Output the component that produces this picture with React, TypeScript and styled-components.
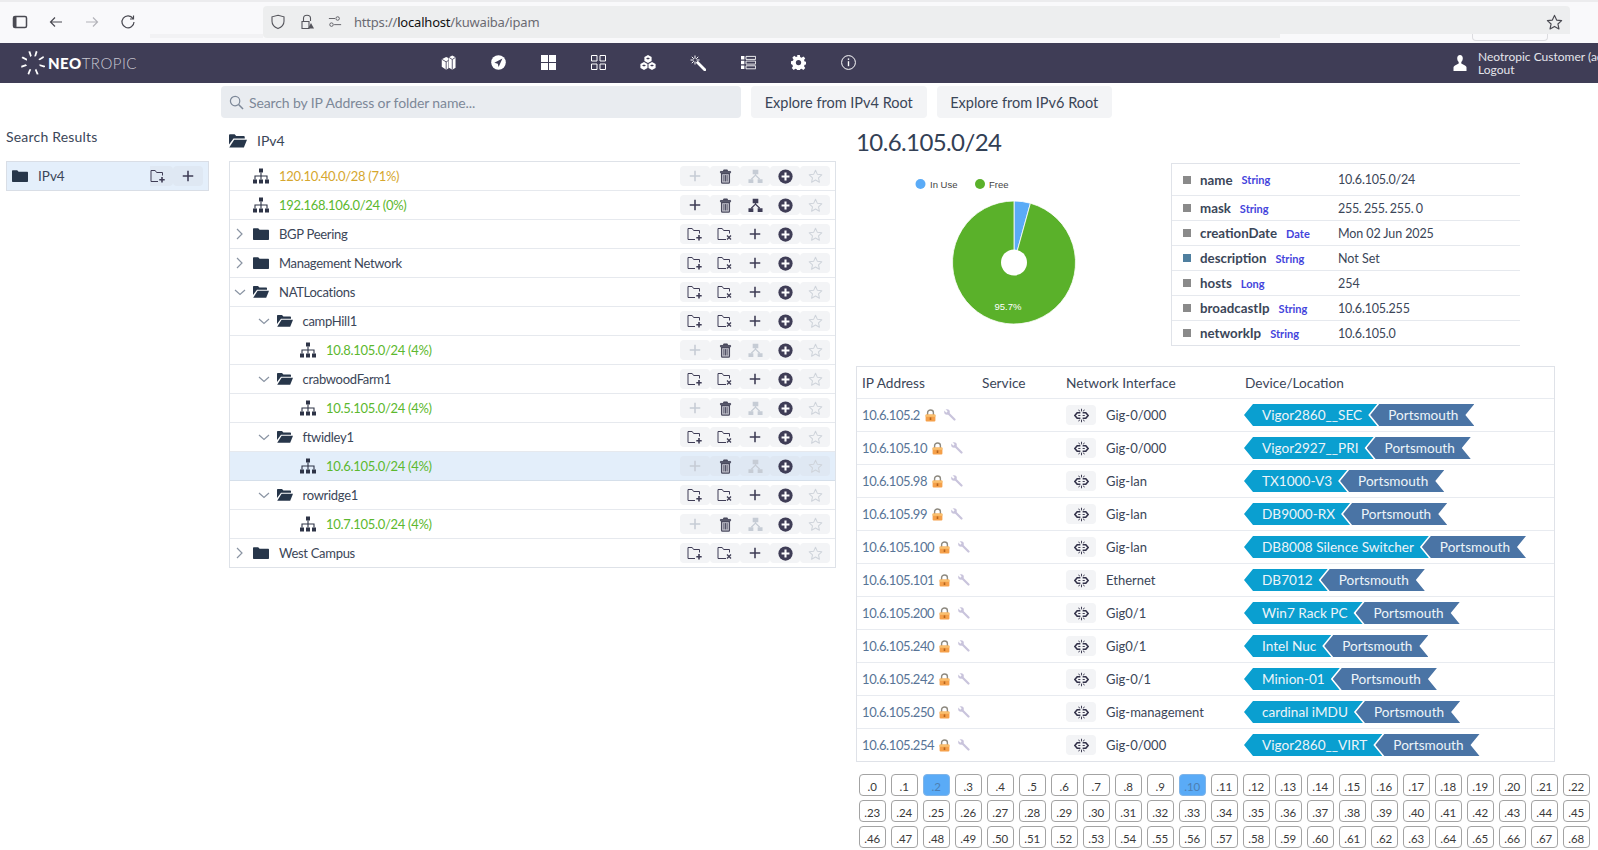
import styled, { createGlobalStyle } from "styled-components";

const GlobalStyle = createGlobalStyle`
  html, body {
    margin: 0;
    height: 850px;
    overflow: hidden;
    background: #fff;
    font-family: Lato, "Noto Sans", sans-serif;
    color: #3b4658;
  }
  * { box-sizing: border-box; }
`;

const DARK = "#3f3d56";
const MUTED = "#c6ccd5";
const FOLDER = "#27364a";

type IconProps = { color?: string; size?: number };

const Svg = ({ size = 16, color = "currentColor", children }: IconProps & { children: React.ReactNode }) => (
  <svg width={size} height={size} viewBox="0 0 16 16" fill="none" stroke={color} style={{ color, flex: "none" }}>
    {children}
  </svg>
);

const FolderClosed = ({ size = 16, color = FOLDER }: IconProps) => (
  <Svg size={size} color={color}>
    <path d="M0 3.2c0-.6.4-1 1-1h4.2l1.4 1.6H15c.6 0 1 .4 1 1v8.2c0 .6-.4 1-1 1H1c-.6 0-1-.4-1-1z" fill={color} stroke="none" />
  </Svg>
);

const FolderOpen = ({ size = 16, color = FOLDER }: IconProps) => (
  <Svg size={size} color={color}>
    <path d="M0 3c0-.6.4-1 1-1h4l1.4 1.5H13c.6 0 1 .4 1 1v1.2H4L0 11z" fill={color} stroke="none" />
    <path d="M4.6 6.8H16l-2.8 7H.2z" fill={color} stroke="none" />
  </Svg>
);

const Sitemap = ({ size = 16, color = "#2e3447" }: IconProps) => (
  <Svg size={size} color={color}>
    <path d="M6 0.5h4v4H6zM0 11.5h4v4H0zM6 11.5h4v4H6zM12 11.5h4v4h-4z" fill={color} stroke="none" />
    <path d="M8 4.5v7M2 11.5V8h12v3.5" strokeWidth="1.1" />
  </Svg>
);

const Hierarchy = ({ color = DARK }: IconProps) => (
  <Svg size={15} color={color}>
    <path d="M5 .8h6v4.700H5zM.5 10.800h5.200v4.200H.5zM10.300 10.800h5.200v4.200h-5.200z" fill={color} stroke="none" />
    <path d="M8 5v1.500L3.500 11M8 6.500l4.500 4.500" strokeWidth="1.400" />
  </Svg>
);

const Plus = ({ color = DARK }: IconProps) => (
  <Svg size={14} color={color}>
    <path d="M8 2v12M2 8h12" strokeWidth="1.800" />
  </Svg>
);

const Trash = ({ color = "#4a4a5e" }: IconProps) => (
  <Svg size={15} color={color}>
    <path d="M6 2.200V1h4v1.200M2.600 2.600h10.800v1.500H2.600z" fill={color} strokeWidth="1" />
    <path d="M3.800 5h8.400v9c0 .6-.4 1-1 1H4.800c-.6 0-1-.4-1-1z" fill="#c9c9d3" strokeWidth="1.300" />
    <path d="M6.300 6.500v6.800M8 6.500v6.800M9.700 6.500v6.800" strokeWidth="1" />
  </Svg>
);

const CirclePlus = () => (
  <Svg size={15} color={DARK}>
    <circle cx="8" cy="8" r="7.600" fill={DARK} stroke="none" />
    <path d="M8 3.800v8.400M3.800 8h8.400" stroke="#fff" strokeWidth="2.200" />
  </Svg>
);

const StarIcon = ({ color = "#cfd4db", size = 15 }: IconProps) => (
  <Svg size={size} color={color}>
    <path d="M8 1.300l2 4.400 4.700.5-3.500 3.200 1 4.700L8 11.700l-4.200 2.400 1-4.700L1.300 6.200 6 5.700z" strokeWidth="1.100" strokeLinejoin="round" />
  </Svg>
);

const FolderAdd = () => (
  <Svg size={16} color={DARK}>
    <path d="M12.500 7.500V4.500H6.600L5.200 2.500H1v11h7" strokeWidth="1" />
    <path d="M12 9v5.500M9.300 11.700h5.400" strokeWidth="1.600" />
  </Svg>
);

const FolderRemove = () => (
  <Svg size={16} color={DARK}>
    <path d="M12.500 7.500V4.500H6.600L5.200 2.500H1v11h8" strokeWidth="1" />
    <path d="M10 9.500l4 4M14 9.500l-4 4" strokeWidth="1.300" />
  </Svg>
);

const Unlink = () => (
  <Svg size={15} color="#33324a">
    <path d="M6.800 5H3.400L.9 8l2.500 3h3.400" strokeWidth="1.700" />
    <path d="M9.200 5h3.400L15.100 8l-2.500 3H9.200" strokeWidth="1.700" />
    <path d="M8 .8v2.800M8 12.400v2.800M5 1.800l1 1.800M11 1.800l-1 1.800M5 14.200l1-1.800M11 14.200l-1-1.800M4.500 8h2.300M9.200 8h2.300" strokeWidth="1" />
  </Svg>
);

const LockIcon = () => (
  <svg width="11" height="13" viewBox="0 0 11 13" style={{ flex: "none" }}>
    <path d="M2.600 6V3.600C2.600 2 3.800 1 5.500 1s2.900 1 2.900 2.600V6" fill="none" stroke="#8e8a80" strokeWidth="1.400" />
    <rect x=".6" y="5.600" width="9.800" height="7" rx="1" fill="#f5a04a" />
    <rect x=".6" y="5.600" width="9.800" height="2.200" fill="#f9c06f" />
    <rect x="4.700" y="8.400" width="1.600" height="2.600" fill="#b5651d" />
  </svg>
);

const WrenchIcon = () => (
  <svg width="12" height="12" viewBox="0 0 12 12" style={{ flex: "none", marginLeft: 3 }}>
    <circle cx="3" cy="3" r="2.800" fill="#c9c4dc" />
    <path d="M3.500 3.500l7 7" stroke="#c9c4dc" strokeWidth="2.200" strokeLinecap="round" />
    <path d="M-.5 -.5L3 3" stroke="#fff" strokeWidth="1.800" />
  </svg>
);

const Logo = () => (
  <svg width="24" height="26" viewBox="-12.500 -13.500 25 27" style={{ flex: "none" }}>
    {[15, 58, 105, 155, 200, 250, 295, 340].map((a) => (
      <path key={a} d="M-.4 -13L1.500 -12.500L1.300 -7.500L-.5 -6.800z" fill="#fff" transform={`rotate(${a})`} />
    ))}
  </svg>
);

const NavIcons = [
  <svg key="box" width="15" height="15" viewBox="0 0 16 16"><path d="M.8 4.500L5.500 2 8 3.300V14l-2.500 1.600L.8 12.500zM8.500 2.500L12 .6l3.500 1.900v11L12 15.600l-3.500-2z" fill="#fff" /><path d="M.8 4.500l4.700 2.800v8.300M5.500 7.300L8 5.800M8.500 2.500l3.500 2.300 3.500-2.300M12 4.800v10.800" fill="none" stroke={DARK} strokeWidth=".9" /></svg>,
  <svg key="nav" width="15" height="15" viewBox="0 0 16 16"><circle cx="8" cy="8" r="7.800" fill="#fff" /><path d="M12.200 3.800L3.600 8.200l3.600 1 .9 3.600z" fill={DARK} /></svg>,
  <svg key="grid" width="15" height="15" viewBox="0 0 15 15" fill="#fff"><path d="M0 0h7v7H0zM8 0h7v7H8zM0 8h7v7H0zM8 8h7v7H8z" /></svg>,
  <svg key="grido" width="15" height="15" viewBox="0 0 15 15" fill="none" stroke="#fff"><path d="M.5.5h5.500v5.500H.5zM9 .5h5.500v5.500H9zM.5 9h5.500v5.500H.5zM9 9h5.500v5.500H9z" /></svg>,
  <svg key="cubes" width="16" height="15" viewBox="0 0 16 15" fill="#fff"><path d="M8 0l3.600 2v4L8 8 4.400 6V2zM4 7l3.500 2v4L4 15 .4 13V9zM12 7l3.600 2v4L12 15l-3.500-2V9z" /><path d="M8 2.400l2 1.100-2 1.100-2-1.100zM4 9.400l2 1.100-2 1.100-2-1.100zM12 9.400l2 1.100-2 1.100-2-1.100z" fill={DARK} /></svg>,
  <svg key="wand" width="16" height="16" viewBox="0 0 16 16"><path d="M6.800 6.800l9 9" stroke="#fff" strokeWidth="2.800" /><path d="M5 .5v3.200M5 6.500V9.500M.5 5h3.200M6.500 5H9.500M1.800 1.800l2 2M8.200 1.800l-2 2M1.800 8.200l2-2" stroke="#fff" strokeWidth="1" /></svg>,
  <svg key="list" width="15" height="15" viewBox="0 0 15 15" fill="#fff"><path d="M0 1h3.400v3.400H0zM0 5.800h3.400v3.400H0zM0 10.600h3.400V14H0z" /><path d="M5 1.400h9.600v3H5zM5 6.100h9.600v3H5zM5 10.800h9.600v3H5z" fill="none" stroke="#fff" strokeWidth=".9" /></svg>,
  <svg key="gear" width="15" height="15" viewBox="0 0 16 16"><path d="M6.600 0h2.800l.4 2.200 1.500.6 1.900-1.300 2 2-1.300 1.900.6 1.500 2.200.4v2.800l-2.200.4-.6 1.500 1.300 1.900-2 2-1.900-1.300-1.500.6-.4 2.200H6.600l-.4-2.200-1.500-.6-1.900 1.300-2-2 1.300-1.900-.6-1.500L-.1 9.400V6.600l2.200-.4.6-1.500-1.300-1.900 2-2 1.900 1.300 1.500-.6z" fill="#fff" /><circle cx="8" cy="8" r="2.800" fill={DARK} /></svg>,
  <svg key="info" width="15" height="15" viewBox="0 0 15 15" fill="none" stroke="#fff"><circle cx="7.500" cy="7.500" r="6.900" /><path d="M7.500 6.200v5" strokeWidth="1.400" /><path d="M7.500 3.400v1.500" strokeWidth="1.400" /></svg>,
];

const BrowserBar = styled.div`
  height: 43px;
  background: #f9f9fb;
  border-top: 2px solid #ececee;
  display: flex;
  align-items: flex-start;
  position: relative;
`;

const BrowserTools = styled.div`
  width: 263px;
  height: 40px;
  display: flex;
  align-items: center;
  padding-left: 12px;
  gap: 20px;
  color: #4a4a52;
`;

const AddressBar = styled.div`
  margin-top: 4px;
  width: 1307px;
  height: 32px;
  background: #edeeef;
  border-radius: 4px;
  display: flex;
  align-items: center;
  padding: 0 7px;
  gap: 13px;
  font-family: "Noto Sans", sans-serif;
  font-size: 13px;
  letter-spacing: -0.2px;
  color: #6a6a72;
`;

const BarEdge = styled.div<{ $left: number; $width: number; $tone: string }>`
  position: absolute;
  top: 32px;
  left: ${(p) => p.$left}px;
  width: ${(p) => p.$width}px;
  height: 4px;
  background: ${(p) => p.$tone};
`;

const HiddenTab = styled.div`
  position: absolute;
  top: 32px;
  left: 1472px;
  width: 76px;
  height: 7px;
  border: 1px solid #dcdce0;
  border-top: none;
  border-radius: 0 0 4px 4px;
`;

const Url = styled.span`
  margin-left: -1px;
  flex: 1;
  b { font-weight: 400; color: #111; }
`;

const NavBar = styled.header`
  height: 40px;
  background: ${DARK};
  display: flex;
  align-items: center;
  padding-left: 21px;
  overflow: hidden;
  white-space: nowrap;
`;

const Brand = styled.div`
  width: 402px;
  flex: none;
  display: flex;
  align-items: center;
  gap: 3px;
  font-size: 15px;
  letter-spacing: 0.5px;
  color: #c9c9d2;
  font-weight: 300;
  b { color: #fff; font-weight: 900; }
`;

const NavMenu = styled.nav`
  display: flex;
  width: 1030px;
  flex: none;
`;

const NavItem = styled.div`
  width: 50px;
  display: flex;
  justify-content: center;
`;

const UserBox = styled.div`
  display: flex;
  flex: none;
  align-items: center;
  gap: 11px;
  color: #e4e4ea;
  font-size: 12px;
`;

const UserLine = styled.div`
  height: 13px;
  line-height: 13px;
`;

const Page = styled.main`
  display: grid;
  grid-template-columns: 221px 635px 1fr;
  grid-template-rows: 35px 1fr;
`;

const SearchRow = styled.div`
  grid-column: 2 / 4;
  display: flex;
  gap: 10px;
  padding-top: 3px;
`;

const SearchBox = styled.div`
  width: 520px;
  height: 32px;
  background: #e9ecf0;
  border-radius: 4px;
  display: flex;
  align-items: center;
  padding: 0 8px;
  gap: 5px;
  font-size: 14px;
  letter-spacing: -0.11px;
  color: #7d8898;
`;

const ExploreButton = styled.button`
  width: 175.5px;
  height: 32px;
  border: none;
  border-radius: 4px;
  background: #f3f4f6;
  font: 14.5px Lato, sans-serif;
  color: #3b4658;
  padding: 0;
`;

const LeftColumn = styled.aside`
  grid-column: 1;
  grid-row: 2;
  padding: 9px 12px 0 6px;
`;

const SideTitle = styled.div`
  font-size: 14px;
  line-height: 20px;
  margin-bottom: 14px;
  letter-spacing: 0.2px;
`;

const ResultRow = styled.div`
  height: 30px;
  border: 1px solid #d9dee6;
  background: #e4effb;
  display: flex;
  align-items: center;
  padding: 0 5px;
  gap: 10px;
  font-size: 13.5px;
`;

const ResultActions = styled.div`
  margin-left: auto;
  display: flex;
`;

const ResultAction = styled.div`
  width: 30px;
  height: 20px;
  background: #dfe8f3;
  border-radius: 4px;
  display: flex;
  align-items: center;
  justify-content: center;
  &:first-child {
    width: 23px;
    border-radius: 0 4px 4px 0;
    justify-content: flex-start;
  }
`;

const MiddleColumn = styled.section`
  grid-column: 2;
  grid-row: 2;
  padding-left: 8px;
`;

const RootHeader = styled.div`
  height: 43px;
  padding: 2px 0 0 0;
  display: flex;
  align-items: center;
  gap: 10px;
  font-size: 14px;
`;

const Tree = styled.div`
  width: 607px;
  border: solid #dee2e8;
  border-width: 1px 1px 0;
`;

const TreeRowBox = styled.div<{ $selected?: boolean; $level: number }>`
  height: 29px;
  border-bottom: 1px solid ${(p) => (p.$selected ? "#d5dfea" : "#e6e9ee")};
  background: ${(p) => (p.$selected ? "#e3eefa" : "#fff")};
  display: flex;
  align-items: center;
  padding: 0 5px 0 ${(p) => 4 + p.$level * 23.5}px;
  &:last-child { border-bottom-color: #dee2e8; }
`;

const Chevron = styled.svg`
  width: 12px;
  height: 12px;
  flex: none;
  margin-right: 7px;
`;

const TreeLabel = styled.span<{ $color?: string }>`
  margin-left: 10px;
  font-size: 13px;
  letter-spacing: -0.3px;
  color: ${(p) => p.$color || "#3b4658"};
`;

const Actions = styled.div`
  margin-left: auto;
  display: flex;
`;

const Action = styled.div<{ $tint?: boolean }>`
  width: 30px;
  height: 20px;
  border-radius: 4px;
  background: ${(p) => (p.$tint ? "#dfe8f3" : "#f3f4f6")};
  display: flex;
  align-items: center;
  justify-content: center;
`;

const RightColumn = styled.section`
  grid-column: 3;
  grid-row: 2;
  width: 699px;
`;

const Heading = styled.h2`
  margin: 9px 0 1px;
  font-size: 24px;
  line-height: 30px;
  font-weight: 400;
  letter-spacing: -0.6px;
  color: #334055;
`;

const InfoRow = styled.div`
  height: 208px;
  display: flex;
`;

const PropsTable = styled.div`
  width: 349px;
  height: 183px;
  margin: 5px 0 0 315px;
  border: solid #e0e3e9;
  border-width: 1px 0 1px 1px;
  flex: none;
`;

const ChartBox = styled.svg`
  width: 315px;
  height: 208px;
  margin-right: -315px;
  flex: none;
`;

const PropRow = styled.div<{ $first?: boolean }>`
  height: ${(p) => (p.$first ? 31 : 25)}px;
  display: grid;
  grid-template-columns: 166px 1fr;
  align-items: center;
  border-top: ${(p) => (p.$first ? "none" : "1px solid #e6e9ee")};
  font-size: 12.5px;
`;

const PropName = styled.div`
  display: flex;
  align-items: center;
  padding-left: 11px;
  gap: 9px;
  font-size: 13.3px;
  font-weight: 700;
  color: #3b4658;
`;

const PropValue = styled.span<{ $spacing?: number; $words?: number }>`
  letter-spacing: ${(p) => p.$spacing || 0}px;
  word-spacing: ${(p) => p.$words || 0}px;
`;

const Marker = styled.span<{ $color?: string }>`
  width: 8px;
  height: 8px;
  background: ${(p) => p.$color || "#8a8a8a"};
`;

const TypeLabel = styled.span`
  font-size: 11px;
  font-weight: 700;
  color: #4444dc;
`;

const IpTable = styled.div`
  border: 1px solid #dfe2e8;
`;

const IpRowBox = styled.div<{ $head?: boolean }>`
  height: ${(p) => (p.$head ? 31 : 33)}px;
  display: grid;
  grid-template-columns: 120px 84px 179px 1fr;
  align-items: center;
  padding-left: 5px;
  border-top: ${(p) => (p.$head ? "none" : "1px solid #e8ebf0")};
  font-size: ${(p) => (p.$head ? 13.7 : 13)}px;
  white-space: nowrap;
`;

const IpCell = styled.div`
  display: flex;
  align-items: center;
  gap: 5px;
  color: #587496;
  letter-spacing: -0.4px;
`;

const IfaceCell = styled.div`
  display: flex;
  align-items: center;
  gap: 10px;
`;

const IfaceButton = styled.div`
  width: 30px;
  height: 20px;
  border-radius: 4px;
  background: #f3f4f6;
  display: flex;
  align-items: center;
  justify-content: center;
`;

const Tags = styled.div`
  display: flex;
  margin-left: -1px;
`;

const Tag = styled.span<{ $location?: boolean }>`
  height: 22px;
  line-height: 22px;
  padding: 0 ${(p) => (p.$location ? 16 : 15)}px 0 18px;
  font-size: 13.6px;
  color: #edf4f9;
  background: ${(p) => (p.$location ? "#4a74a5" : "#0a9fd0")};
  margin-left: ${(p) => (p.$location ? -7 : 0)}px;
  clip-path: polygon(0 50%, 9px 0, 100% 0, calc(100% - 9px) 50%, 100% 100%, 9px 100%);
`;

const Bubbles = styled.div`
  margin: 12px 0 0 2.5px;
  display: grid;
  grid-template-columns: repeat(23, 27.5px);
  grid-auto-rows: 21.5px;
  gap: 4.5px;
`;

const Bubble = styled.div<{ $on?: boolean }>`
  border: 1px solid ${(p) => (p.$on ? "#7fb4e8" : "#a3a3a3")};
  border-radius: 4px;
  background: ${(p) => (p.$on ? "#5aabf7" : "#fff")};
  color: ${(p) => (p.$on ? "#4d7fb3" : "#3a3a3a")};
  font-size: 11.5px;
  display: flex;
  align-items: flex-end;
  justify-content: center;
  padding-bottom: 2px;
`;

type Row = { level: number; label: string; kind: "subnet" | "folder"; color?: string; open?: boolean; active?: boolean; selected?: boolean };

const GREEN = "#5cb82e";
const rows: Row[] = [
  { level: 0, label: "120.10.40.0/28 (71%)", kind: "subnet", color: "#d6a72e" },
  { level: 0, label: "192.168.106.0/24 (0%)", kind: "subnet", color: GREEN, active: true },
  { level: 0, label: "BGP Peering", kind: "folder" },
  { level: 0, label: "Management Network", kind: "folder" },
  { level: 0, label: "NATLocations", kind: "folder", open: true },
  { level: 1, label: "campHill1", kind: "folder", open: true },
  { level: 2, label: "10.8.105.0/24 (4%)", kind: "subnet", color: GREEN },
  { level: 1, label: "crabwoodFarm1", kind: "folder", open: true },
  { level: 2, label: "10.5.105.0/24 (4%)", kind: "subnet", color: GREEN },
  { level: 1, label: "ftwidley1", kind: "folder", open: true },
  { level: 2, label: "10.6.105.0/24 (4%)", kind: "subnet", color: GREEN, selected: true },
  { level: 1, label: "rowridge1", kind: "folder", open: true },
  { level: 2, label: "10.7.105.0/24 (4%)", kind: "subnet", color: GREEN },
  { level: 0, label: "West Campus", kind: "folder" },
];

const props = [
  { name: "name", type: "String", value: "10.6.105.0/24", spacing: -0.2 },
  { name: "mask", type: "String", value: "255. 255. 255. 0", spacing: -0.3, words: -0.5 },
  { name: "creationDate", type: "Date", value: "Mon 02 Jun 2025", spacing: -0.1 },
  { name: "description", type: "String", value: "Not Set", color: "#4f7f9f" },
  { name: "hosts", type: "Long", value: "254" },
  { name: "broadcastIp", type: "String", value: "10.6.105.255", spacing: -0.2 },
  { name: "networkIp", type: "String", value: "10.6.105.0", spacing: -0.2 },
];

const ips = [
  ["10.6.105.2", "Gig-0/000", "Vigor2860__SEC"],
  ["10.6.105.10", "Gig-0/000", "Vigor2927__PRI"],
  ["10.6.105.98", "Gig-lan", "TX1000-V3"],
  ["10.6.105.99", "Gig-lan", "DB9000-RX"],
  ["10.6.105.100", "Gig-lan", "DB8008 Silence Switcher"],
  ["10.6.105.101", "Ethernet", "DB7012"],
  ["10.6.105.200", "Gig0/1", "Win7 Rack PC"],
  ["10.6.105.240", "Gig0/1", "Intel Nuc"],
  ["10.6.105.242", "Gig-0/1", "Minion-01"],
  ["10.6.105.250", "Gig-management", "cardinal iMDU"],
  ["10.6.105.254", "Gig-0/000", "Vigor2860__VIRT"],
];

function TreeRow({ row }: { row: Row }) {
  const isFolder = row.kind === "folder";
  return (
    <TreeRowBox $level={row.level} $selected={row.selected}>
      <Chevron viewBox="0 0 12 12" fill="none" stroke="#8a94a3" strokeWidth="1.2">
        {isFolder && <path d={row.open ? "M1 4l5 4.5L11 4" : "M3 1l5 5-5 5"} />}
      </Chevron>
      {isFolder ? row.open ? <FolderOpen /> : <FolderClosed /> : <Sitemap />}
      <TreeLabel $color={row.color}>{row.label}</TreeLabel>
      <Actions>
        {isFolder ? (
          <>
            <Action><FolderAdd /></Action>
            <Action><FolderRemove /></Action>
            <Action><Plus /></Action>
          </>
        ) : (
          <>
            <Action $tint={row.selected}><Plus color={row.active ? DARK : MUTED} /></Action>
            <Action $tint={row.selected}><Trash /></Action>
            <Action $tint={row.selected}><Hierarchy color={row.active ? DARK : MUTED} /></Action>
          </>
        )}
        <Action $tint={row.selected}><CirclePlus /></Action>
        <Action $tint={row.selected}><StarIcon /></Action>
      </Actions>
    </TreeRowBox>
  );
}

function Chart() {
  const cx = 158;
  const cy = 104.5;
  const r = 61.5;
  const end = (2 * Math.PI * 4.3) / 100;
  const ex = cx + r * Math.sin(end);
  const ey = cy - r * Math.cos(end);
  return (
    <ChartBox viewBox="0 0 315 208">
      <circle cx="64.500" cy="26" r="5" fill="#5aabf7" />
      <text x="74" y="29.500" fontFamily="Liberation Sans" fontSize="9.500" fill="#444">In Use</text>
      <circle cx="124" cy="26" r="5" fill="#5ab12a" />
      <text x="133" y="29.500" fontFamily="Liberation Sans" fontSize="9.500" fill="#444">Free</text>
      <path d={`M${cx} ${cy}L${cx} ${cy - r}A${r} ${r} 0 0 1 ${ex} ${ey}Z`} fill="#5aabf7" stroke="#fff" strokeWidth=".8" />
      <path d={`M${cx} ${cy}L${ex} ${ey}A${r} ${r} 0 1 1 ${cx} ${cy - r}Z`} fill="#5ab12a" stroke="#fff" strokeWidth=".8" />
      <circle cx={cx} cy={cy} r="13" fill="#fff" />
      <text x={152} y={152} textAnchor="middle" fontFamily="Liberation Sans" fontSize="9.500" fill="#fff">95.7%</text>
    </ChartBox>
  );
}

export default function App() {
  return (
    <>
      <GlobalStyle />
      <BrowserBar>
        <BrowserTools>
          <Svg size={16}><rect x="1.500" y="2.500" width="13" height="11" rx="1.500" strokeWidth="1.500" /><rect x="2" y="3" width="2.500" height="10" fill="currentColor" stroke="none" /></Svg>
          <Svg size={16}><path d="M14 8H2.500M7 3.500L2.500 8 7 12.500" strokeWidth="1.200" /></Svg>
          <Svg size={16} color="#b4b4ba"><path d="M2 8h11.500M9 3.500L13.500 8 9 12.500" strokeWidth="1.200" /></Svg>
          <Svg size={16}><path d="M13 4.500A6 6 0 1 0 14 8M13.500 1.500v3.500H10" strokeWidth="1.200" /></Svg>
        </BrowserTools>
        <AddressBar>
          <Svg size={16} color="#55555c"><path d="M8 1.200l6 1.600v4.400c0 3.600-2.600 6-6 7.400-3.400-1.400-6-3.800-6-7.400V2.800z" strokeWidth="1.100" /></Svg>
          <Svg size={16} color="#55555c"><path d="M4.500 7V4.200C4.500 2.400 6 1.200 8 1.200s3.500 1.200 3.500 3V7M3 7.500h7v7H3z" strokeWidth="1.100" /><path d="M12 9l3 5.500H9z" fill="#55555c" stroke="none" /></Svg>
          <Svg size={14} color="#55555c"><circle cx="11" cy="4" r="2" /><circle cx="4" cy="11" r="2" /><path d="M1 4h7M7 11h8" /></Svg>
          <Url>https://<b>localhost</b>/kuwaiba/ipam</Url>
          <StarIcon color="#4a4a52" size={17} />
        </AddressBar>
        <BarEdge $left={150} $width={113} $tone="#f2f2f4" />
        <BarEdge $left={1280} $width={290} $tone="#f9f9fb" />
        <HiddenTab />
      </BrowserBar>
      <NavBar>
        <Brand>
          <Logo />
          <span><b>NEO</b>TROPIC</span>
        </Brand>
        <NavMenu>
          {NavIcons.map((icon) => (
            <NavItem key={icon.key}>{icon}</NavItem>
          ))}
        </NavMenu>
        <UserBox>
          <svg width="14" height="16" viewBox="0 0 13 16" fill="#fff" style={{ flex: "none" }}>
            <path d="M6.500 0c1.800 0 2.800 1.300 2.800 3.300 0 1.500-.6 3-1.500 3.800v1.300l3.700 2c1 .5 1.500 1.200 1.500 2.200V16H0v-3.400c0-1 .5-1.700 1.500-2.200l3.700-2V7.100c-.9-.8-1.500-2.300-1.500-3.800C3.700 1.300 4.700 0 6.500 0z" />
          </svg>
          <div>
            <UserLine>Neotropic Customer (admin)</UserLine>
            <UserLine>Logout</UserLine>
          </div>
        </UserBox>
      </NavBar>
      <Page>
        <SearchRow>
          <SearchBox>
            <Svg size={15} color="#7d8898"><circle cx="6.500" cy="6.500" r="5" strokeWidth="1.300" /><path d="M10.200 10.200L15 15" strokeWidth="1.600" /></Svg>
            Search by IP Address or folder name...
          </SearchBox>
          <ExploreButton>Explore from IPv4 Root</ExploreButton>
          <ExploreButton>Explore from IPv6 Root</ExploreButton>
        </SearchRow>
        <LeftColumn>
          <SideTitle>Search Results</SideTitle>
          <ResultRow>
            <FolderClosed />
            IPv4
            <ResultActions>
              <ResultAction><FolderAdd /></ResultAction>
              <ResultAction><Plus /></ResultAction>
            </ResultActions>
          </ResultRow>
        </LeftColumn>
        <MiddleColumn>
          <RootHeader>
            <FolderOpen size={18} />
            IPv4
          </RootHeader>
          <Tree>
            {rows.map((row) => (
              <TreeRow key={row.label} row={row} />
            ))}
          </Tree>
        </MiddleColumn>
        <RightColumn>
          <Heading>10.6.105.0/24</Heading>
          <InfoRow>
            <Chart />
            <PropsTable>
              {props.map((p, i) => (
                <PropRow key={p.name} $first={i === 0}>
                  <PropName>
                    <Marker $color={p.color} />
                    {p.name}
                    <TypeLabel>{p.type}</TypeLabel>
                  </PropName>
                  <PropValue $spacing={p.spacing} $words={p.words}>{p.value}</PropValue>
                </PropRow>
              ))}
            </PropsTable>
          </InfoRow>
          <IpTable>
            <IpRowBox $head>
              <span>IP Address</span>
              <span>Service</span>
              <span>Network Interface</span>
              <span>Device/Location</span>
            </IpRowBox>
            {ips.map(([ip, iface, device]) => (
              <IpRowBox key={ip}>
                <IpCell>
                  {ip}
                  <LockIcon />
                  <WrenchIcon />
                </IpCell>
                <span />
                <IfaceCell>
                  <IfaceButton><Unlink /></IfaceButton>
                  {iface}
                </IfaceCell>
                <Tags>
                  <Tag>{device}</Tag>
                  <Tag $location>Portsmouth</Tag>
                </Tags>
              </IpRowBox>
            ))}
          </IpTable>
          <Bubbles>
            {Array.from({ length: 69 }, (_, i) => (
              <Bubble key={i} $on={i === 2 || i === 10}>.{i}</Bubble>
            ))}
          </Bubbles>
        </RightColumn>
      </Page>
    </>
  );
}
